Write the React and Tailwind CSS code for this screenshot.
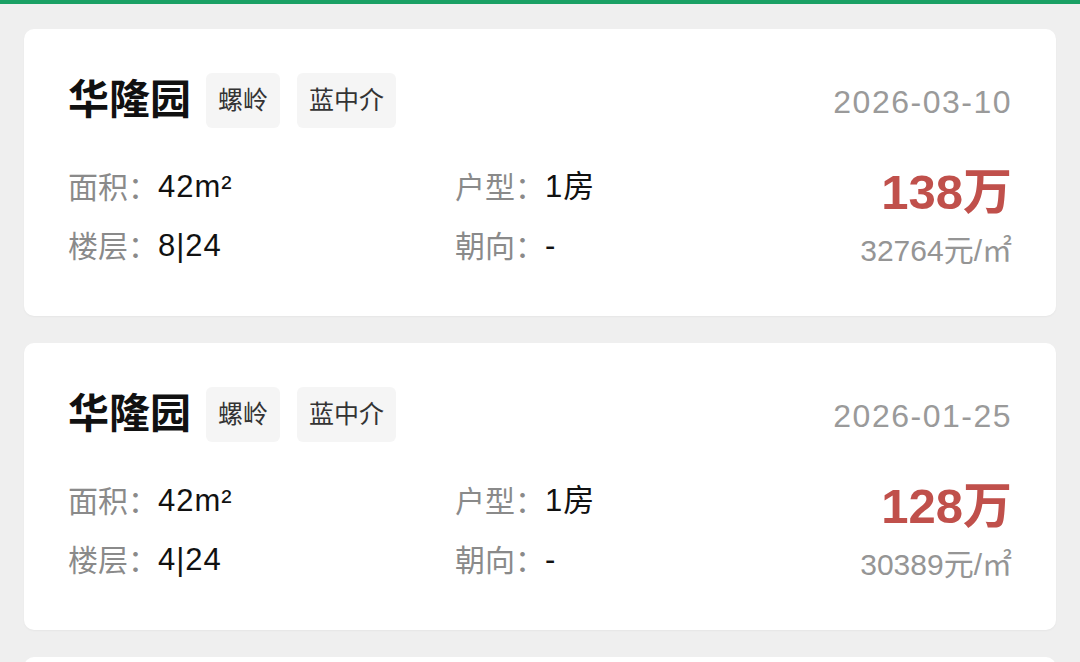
import React from "react";

const listings = [
  { name: "华隆园", area: "螺岭", agent: "蓝中介", date: "2026-03-10", size: "42m²", layout: "1房", floor: "8|24", facing: "-", price: "138万", unit: "32764元/㎡" },
  { name: "华隆园", area: "螺岭", agent: "蓝中介", date: "2026-01-25", size: "42m²", layout: "1房", floor: "4|24", facing: "-", price: "128万", unit: "30389元/㎡" },
  { name: "华隆园", area: "螺岭", agent: "蓝中介", date: "2025-12-18", size: "42m²", layout: "1房", floor: "6|24", facing: "-", price: "135万", unit: "32142元/㎡" },
];

const Field = ({ label, value }) => (
  <div className="flex items-center h-[40px]">
    <span className="text-[30px] text-[#8a8a8a]">{label}：</span>
    <span className="text-[31px] tracking-[1px] text-[#111]">{value}</span>
  </div>
);

const ListingCard = ({ item }) => (
  <div className="bg-white rounded-[10px] px-[44px] pt-[44px] pb-[50px] shadow-[0_1px_2px_rgba(0,0,0,0.04)]">
    {/* header */}
    <div className="flex items-center justify-between">
      <div className="flex items-center">
        <h2 className="text-[41px] font-bold text-[#111] leading-none">{item.name}</h2>
        <span className="ml-[15px] h-[55px] px-[12px] flex items-center bg-[#f5f5f5] rounded-[6px] text-[25px] text-[#333]">
          {item.area}
        </span>
        <span className="ml-[17px] h-[55px] px-[12px] flex items-center bg-[#f5f5f5] rounded-[6px] text-[25px] text-[#333]">
          {item.agent}
        </span>
      </div>
      <span className="mt-[3px] text-[32px] text-[#9a9a9a] tracking-[1.5px]">{item.date}</span>
    </div>

    {/* body */}
    <div className="mt-[39px] flex items-start justify-between">
      <div className="grid grid-cols-[387px_1fr] gap-y-[19px] flex-1">
        <Field label="面积" value={item.size} />
        <Field label="户型" value={item.layout} />
        <Field label="楼层" value={item.floor} />
        <Field label="朝向" value={item.facing} />
      </div>
      <div className="flex flex-col items-end">
        <span className="text-[49px] font-bold text-[#c0504b] leading-[50px]">{item.price}</span>
        <span className="mt-[19px] text-[30px] text-[#959595] leading-[30px]">{item.unit}</span>
      </div>
    </div>
  </div>
);

export default function App() {
  return (
    <div className="h-[662px] overflow-hidden bg-[#efefef] font-['Liberation_Sans','Noto_Sans_CJK_SC',sans-serif]">
      <div className="h-[4px] bg-[#1aa064]" />
      <div className="px-[24px] pt-[25px] flex flex-col gap-[27px]">
        {listings.map((item, i) => (
          <ListingCard key={i} item={item} />
        ))}
      </div>
    </div>
  );
}
